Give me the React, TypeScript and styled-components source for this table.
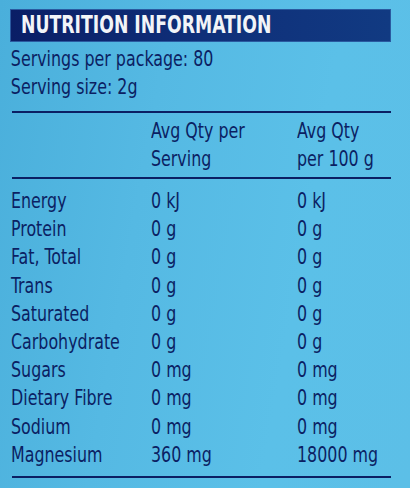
import React from "react";
import styled, { createGlobalStyle } from "styled-components";

const GlobalStyle = createGlobalStyle`
  html, body {
    margin: 0;
    padding: 0;
  }
  body {
    font-family: "DejaVu Sans Condensed", "Liberation Sans", sans-serif;
  }
`;

const StyledPanel = styled.div`
  width: 410px;
  height: 488px;
  box-sizing: border-box;
  padding: 9px 19px 0 10px;
  background: linear-gradient(100deg, #4aafdb 0%, #55b9e3 35%, #5bc0e8 70%, #5cbfe7 100%);
  color: #0b1f63;
  overflow: hidden;
`;

const StyledTitleBar = styled.div`
  height: 33px;
  box-sizing: border-box;
  border: 1px solid #2a5aa0;
  background: linear-gradient(90deg, #0a1e66 0%, #0f2f79 50%, #113a82 100%);
  padding-left: 10px;
`;

const StyledTitle = styled.div`
  color: #f2f4f8;
  font-weight: bold;
  font-size: 24px;
  line-height: 31px;
  white-space: nowrap;
  transform: scaleX(0.8);
  transform-origin: left center;
`;

const StyledInfoLine = styled.div`
  font-size: 21px;
  line-height: 28px;
  padding-left: 1px;
  white-space: nowrap;
  transform: scaleX(0.84);
  transform-origin: left center;
`;

const StyledInfo = styled.div`
  padding-top: 3px;
  margin-bottom: 10px;
`;

const StyledGrid = styled.div<{ $top?: boolean }>`
  display: grid;
  grid-template-columns: 140px 146px 1fr;
  margin-left: 2px;
  border-top: 2px solid #0b1f63;
  padding: ${p => (p.$top ? "4px 0 4px" : "8px 0 7px")};
`;

const StyledCell = styled.div<{ $pitch?: number }>`
  font-size: 21px;
  line-height: ${p => p.$pitch ?? 28}px;
  margin-left: -1px;
  white-space: nowrap;
  transform: scaleX(0.84);
  transform-origin: left center;
`;

const StyledRule = styled.div`
  height: 2px;
  margin-left: 2px;
  background: #0b1f63;
`;

const rows: [string, string, string][] = [
  ["Energy", "0 kJ", "0 kJ"],
  ["Protein", "0 g", "0 g"],
  ["Fat, Total", "0 g", "0 g"],
  ["Trans", "0 g", "0 g"],
  ["Saturated", "0 g", "0 g"],
  ["Carbohydrate", "0 g", "0 g"],
  ["Sugars", "0 mg", "0 mg"],
  ["Dietary Fibre", "0 mg", "0 mg"],
  ["Sodium", "0 mg", "0 mg"],
  ["Magnesium", "360 mg", "18000 mg"]
];

export default function App() {
  return (
    <>
      <GlobalStyle />
      <StyledPanel>
        <StyledTitleBar>
          <StyledTitle>NUTRITION INFORMATION</StyledTitle>
        </StyledTitleBar>
        <StyledInfo>
          <StyledInfoLine>Servings per package: 80</StyledInfoLine>
          <StyledInfoLine>Serving size: 2g</StyledInfoLine>
        </StyledInfo>
        <StyledGrid $top>
          <StyledCell />
          <StyledCell>
            Avg Qty per
            <br />
            Serving
          </StyledCell>
          <StyledCell>
            Avg Qty
            <br />
            per 100 g
          </StyledCell>
        </StyledGrid>
        <StyledGrid>
          {rows.map(([name, serving, per100]) => (
            <React.Fragment key={name}>
              <StyledCell $pitch={28.2}>{name}</StyledCell>
              <StyledCell $pitch={28.2}>{serving}</StyledCell>
              <StyledCell $pitch={28.2}>{per100}</StyledCell>
            </React.Fragment>
          ))}
        </StyledGrid>
        <StyledRule />
      </StyledPanel>
    </>
  );
}
